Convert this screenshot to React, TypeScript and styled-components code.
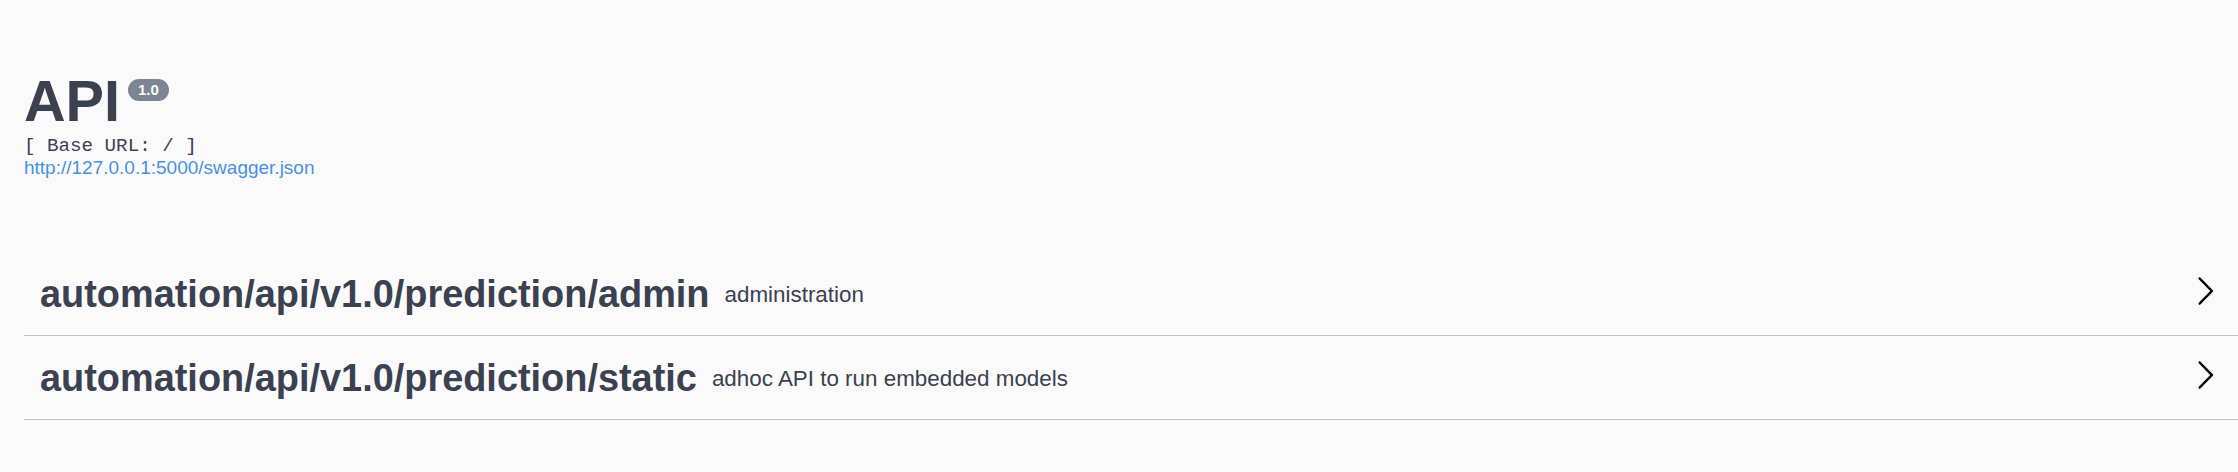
import { createGlobalStyle } from "styled-components";
import styled from "styled-components";

const GlobalStyle = createGlobalStyle`
  html, body {
    margin: 0;
    padding: 0;
    background: #fafafa;
  }
  body {
    font-family: "Liberation Sans", Arial, sans-serif;
    color: #3b4151;
  }
`;

const Page = styled.div`
  padding: 73px 0 0 24px;
`;

const Info = styled.div`
  display: flex;
  flex-direction: column;
  align-items: flex-start;
  margin-bottom: 76px;
`;

const TitleRow = styled.div`
  display: flex;
  align-items: flex-start;
`;

const Title = styled.h2`
  margin: 0;
  font-size: 57.6px;
  line-height: 1;
  font-weight: 700;
  color: #3b4151;
`;

const Version = styled.span`
  display: inline-flex;
  align-items: center;
  height: 21px;
  margin: 6px 0 0 8px;
  padding: 0 10px 1px;
  border-radius: 57px;
  background: #7d8492;
  color: #fafafa;
  font-size: 15px;
  font-weight: 700;
`;

const BaseUrl = styled.pre`
  margin: 5px 0 0;
  font-family: "Liberation Mono", "Courier New", monospace;
  font-size: 19.2px;
  line-height: 21px;
  color: #3b4151;
`;

const SpecLink = styled.a`
  margin-top: 1px;
  font-size: 19px;
  line-height: 1;
  color: #4990e2;
  text-decoration: none;
`;

const TagRow = styled.div`
  display: flex;
  align-items: center;
  height: 82.4px;
  padding: 0 17px 0 16px;
  border-bottom: 1px solid rgba(59, 65, 81, 0.3);
  margin-bottom: 0.6px;
  cursor: pointer;
`;

const TagName = styled.span`
  font-size: 37.9px;
  line-height: 1;
  font-weight: 700;
  color: #3b4151;
  padding-top: 2px;
`;

const TagDescription = styled.small`
  flex: 1;
  padding: 2px 16px 0 15px;
  font-size: 22.4px;
  line-height: 1;
  color: #3b4151;
`;

const ExpandButton = styled.button`
  display: flex;
  padding: 0 0 5px;
  border: none;
  background: none;
  cursor: pointer;
`;

function Arrow() {
  return (
    <svg width="32" height="32" viewBox="0 0 20 20" fill="#000">
      <path d="M13.25 10L6.109 2.58a.697.697 0 0 1 0-.979.68.68 0 0 1 .969 0l7.83 7.908a.697.697 0 0 1 0 .979l-7.83 7.908a.68.68 0 0 1-.969 0 .697.697 0 0 1 0-.979L13.25 10z" />
    </svg>
  );
}

const tags = [
  { name: "automation/api/v1.0/prediction/admin", description: "administration" },
  {
    name: "automation/api/v1.0/prediction/static",
    description: "adhoc API to run embedded models",
  },
];

function App() {
  return (
    <>
      <GlobalStyle />
      <Page>
        <Info>
          <TitleRow>
            <Title>API</Title>
            <Version>1.0</Version>
          </TitleRow>
          <BaseUrl>[ Base URL: / ]</BaseUrl>
          <SpecLink href="#">http://127.0.0.1:5000/swagger.json</SpecLink>
        </Info>
        {tags.map((tag) => (
          <TagRow key={tag.name}>
            <TagName>{tag.name}</TagName>
            <TagDescription>{tag.description}</TagDescription>
            <ExpandButton>
              <Arrow />
            </ExpandButton>
          </TagRow>
        ))}
      </Page>
    </>
  );
}
export default App;
